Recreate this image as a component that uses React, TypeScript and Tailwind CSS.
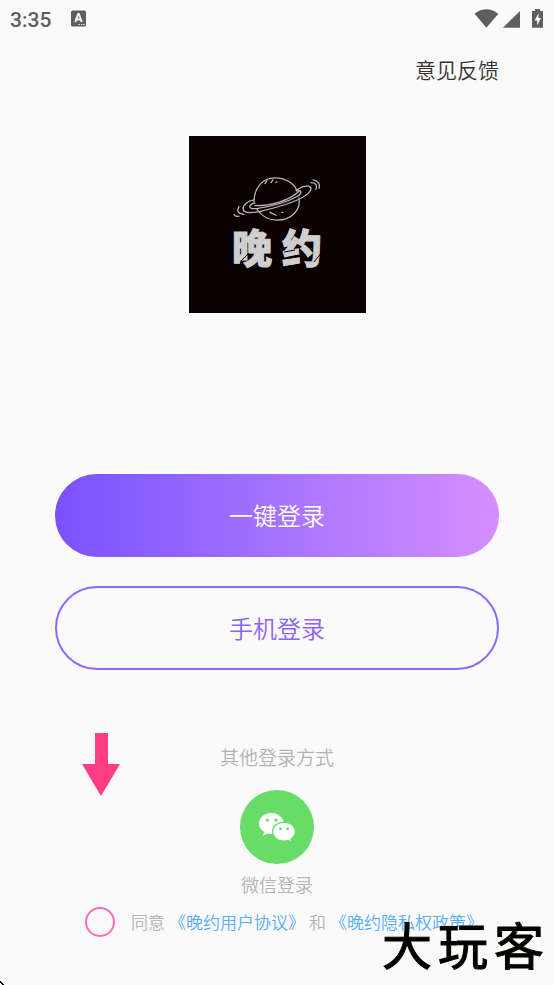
import { useState } from "react";

function StatusBar() {
  return (
    <header className="flex h-10 items-center justify-between pr-2 pl-2.5 text-[#5e5e5e]">
      <div className="flex items-center gap-5">
        <time className="font-[Roboto] text-[21px] leading-10 font-medium">3:35</time>
        <svg viewBox="0 0 15 20" className="h-5 w-[15px]" aria-hidden="true">
          <rect y="0.5" width="15" height="16" rx="1.5" fill="currentColor" />
          <path d="M4.2 12 L7.2 4 H7.8 L10.8 12 M5.6 9.6 H9.4" fill="none" stroke="#fafafa" strokeWidth="2" />
          <path d="M7.5 14.5 h1.3 M10 14.5 h1.3 M12.3 14.5 h1.3" stroke="#fafafa" strokeWidth="1.2" />
        </svg>
      </div>
      <svg viewBox="0 0 72 22" className="h-[22px] w-[72px]" aria-hidden="true">
        <path d="M0.5 4.7 Q12.3 -4.2 24.3 4.7 L12.4 18.7 Z" fill="currentColor" />
        <path d="M29 18.7 L46 1.9 V18.7 Z" fill="currentColor" />
        <path d="M61 -0.2 h5 v2.2 h3 V18.7 H58 V2 h3 Z" fill="currentColor" />
        <path d="M64.8 4 L60.5 11.4 H63.2 V16.6 L67 9 H64.4 Z" fill="#fafafa" />
      </svg>
    </header>
  );
}

function AppLogo() {
  return (
    <div className="flex size-[177px] flex-col items-center bg-[#0a0002] pt-[38px] text-[#cfcfcf]">
      <svg
        viewBox="-3 0 90 50"
        className="h-12 w-[90px]"
        fill="none"
        stroke="#b9b9b9"
        strokeWidth="1.3"
        strokeLinecap="round"
        preserveAspectRatio="none"
        aria-hidden="true"
      >
        <path d="M19 29 C19 14 28 4 40 4 C52 4 60 11 62 18 M64 25 C66 38 56 48 42 48 C32 48 26 43 22 37" />
        <path d="M61 17 C71 10 79 12 75 18 C70 26 48 33 33 37 C19 41 8 42 8 36 C8 32 13 28 19 27" />
        <path d="M63 17 C68 17 66 22 61 24 C51 30 34 34 22 36 C12 37 13 32 20 30" />
        <path d="M20 33 C36 33 54 28 64 18" />
        <path d="M30 10 l2 -3 M36 9 l2 -3 M41 9 l1 -1 M35 40 l6 3 M47 40 l1 0" />
        <path d="M76 9 Q83 9 81 16 M78 6 Q86 8 84 15 M4 34 Q0 41 9 42 M-1 42 Q0 45 4 44" />
      </svg>
      <div className="relative flex gap-2.5 font-['Noto_Sans_CJK_SC',sans-serif] text-[40px] leading-[48px] font-black [-webkit-text-stroke:1px_#cfcfcf]">
        <span>晚</span>
        <span>约</span>
        <svg viewBox="0 0 90 48" className="absolute inset-0 size-full" stroke="#0a0002" strokeWidth="1" aria-hidden="true">
          <path d="M9 39 L17 31 M52 30 L63 28 M82 40 L90 30" />
        </svg>
      </div>
    </div>
  );
}

function WeChatIcon() {
  return (
    <svg viewBox="0 0 36 30" className="h-[30px] w-9" aria-hidden="true">
      <path
        d="M12.5 1 C5.6 1 0 5.7 0 11.5 C0 15 2 17.8 5 19.8 L4.2 23.7 L8.7 21.4 C10 21.9 12 22.1 13.5 22 L25 12.5 C25 6 19.4 1 12.5 1 Z"
        fill="white"
      />
      <path
        d="M25 10.1 C18.6 10.1 13.6 14.2 13.6 19.5 C13.6 25.1 18.8 29.1 25 29.1 C26.6 29.1 28 28.9 29.3 28.4 L32.8 30 L32 27 C34.5 25.3 36.4 22.5 36.4 19.5 C36.4 14.2 31.2 10.1 25 10.1 Z"
        fill="white"
        stroke="#67dc66"
        strokeWidth="1.2"
      />
      <circle cx="8.3" cy="8.1" r="1.7" fill="#67dc66" />
      <circle cx="17" cy="8.1" r="1.7" fill="#67dc66" />
      <circle cx="21.5" cy="16.8" r="1.4" fill="#67dc66" />
      <circle cx="28.5" cy="16.8" r="1.4" fill="#67dc66" />
    </svg>
  );
}

export default function App() {
  const [agreed, setAgreed] = useState(false);

  return (
    <div className="relative flex min-h-screen flex-col overflow-hidden bg-[#fafafa] font-['Noto_Sans_CJK_SC',sans-serif] font-[350]">
      <StatusBar />

      <main className="flex flex-col px-[55px] pt-3.5">
        <button type="button" className="self-end text-[21px] leading-[30px] text-[#333333]">
          意见反馈
        </button>

        <div className="mt-[52px] flex justify-center">
          <AppLogo />
        </div>

        <div className="mt-[161px] flex flex-col gap-[29px] text-2xl">
          <button type="button" className="h-[83px] rounded-full bg-linear-to-r from-[#7950ff] to-[#d68eff] pb-0.5 text-white">
            一键登录
          </button>
          <button type="button" className="h-[84px] rounded-full border-2 border-[#9167ff] text-[#8c62ff]">
            手机登录
          </button>
        </div>

        <section className="mt-[72px] flex flex-col items-center text-[#b3b3b3]">
          <h2 className="text-[19px] leading-[30px]">其他登录方式</h2>
          <button type="button" className="mt-[18px] flex flex-col items-center gap-1.5 text-lg leading-7">
            <span className="flex size-[74px] items-center justify-center rounded-full bg-[#67dc66]">
              <WeChatIcon />
            </span>
            微信登录
          </button>
        </section>
      </main>

      <div className="mt-[9px] flex items-center gap-4 pl-[85px] text-[17px] leading-[30px] whitespace-nowrap text-[#b3b3b3]">
        <input
          id="agree"
          type="checkbox"
          checked={agreed}
          onChange={(event) => setAgreed(event.target.checked)}
          className="size-[30px] shrink-0 appearance-none rounded-full border-2 border-[#ff69b9] checked:bg-[#ff69b9]"
        />
        <p className="flex gap-1">
          <label htmlFor="agree">同意</label>
          <a href="#terms" className="text-[#55acff]">《晚约用户协议》</a>
          <span>和</span>
          <a href="#privacy" className="text-[#55acff]">《晚约隐私权政策》</a>
        </p>
      </div>

      <svg viewBox="0 0 38 63" className="absolute top-[733px] left-[82px] h-[63px] w-[38px]" aria-hidden="true">
        <path d="M13 0 H26 V31 H38 L19 63 L0 31 H13 Z" fill="#ff3d84" />
      </svg>

      <div className="pointer-events-none absolute right-2.5 bottom-2.5 flex gap-1.5 text-[50px] leading-[64px] font-normal text-black text-shadow-[0_0_2px_#d8d0a0] [-webkit-text-stroke:1px_black]">
        <span>大</span>
        <span>玩</span>
        <span>客</span>
      </div>

      <svg viewBox="0 0 4 4" className="absolute bottom-0 left-0 size-1" aria-hidden="true">
        <path d="M0 0 h1 v1 h1 v1 h1 v1 h1 v1 h-2 v-1 h-1 v-1 h-1 Z" fill="black" />
      </svg>
    </div>
  );
}
